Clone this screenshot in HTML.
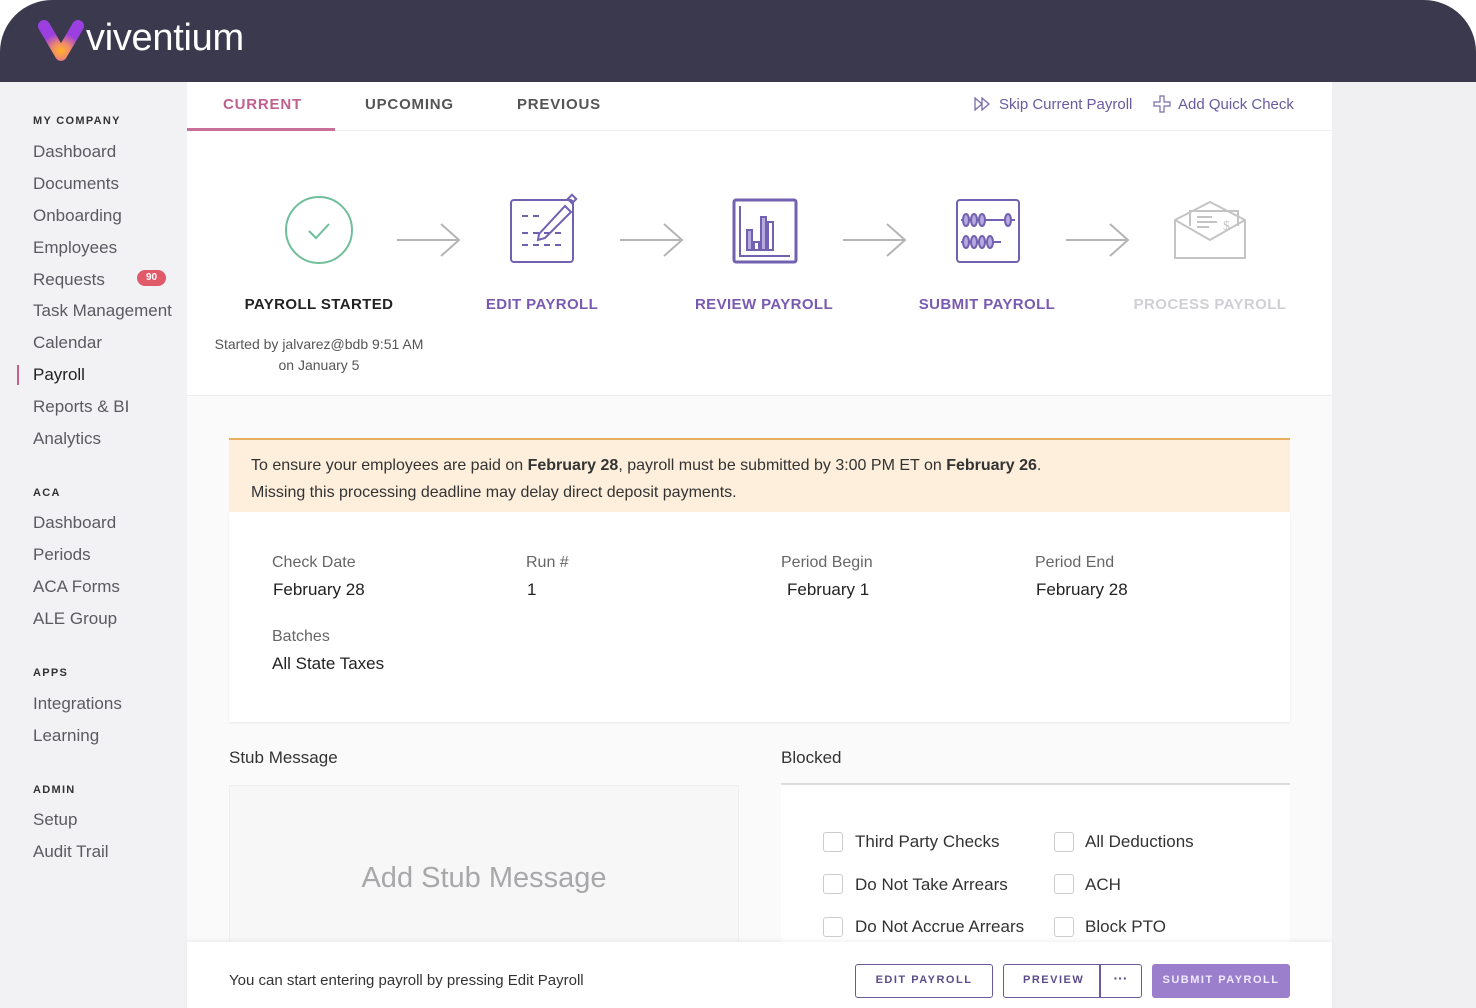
<!DOCTYPE html>
<html><head><meta charset="utf-8"><style>
*{margin:0;padding:0;box-sizing:border-box}
body{width:1476px;height:1008px;background:#fff;font-family:"Liberation Sans",sans-serif;overflow:hidden;position:relative}
.frame{position:absolute;left:0;top:0;width:1476px;height:1008px;border-radius:52px 52px 0 0;overflow:hidden;background:#f0f0f3}
.hdr{position:absolute;left:0;top:0;width:1476px;height:82px;background:#3b394d}
.logo{position:absolute;left:86px;top:17px;color:#fff;font-size:38px;letter-spacing:-0.3px}
.side{position:absolute;left:0;top:82px;width:187px;bottom:0;background:#f2f2f5}
.sh{position:absolute;left:33px;font-size:11px;font-weight:bold;letter-spacing:1.3px;color:#333}
.si{position:absolute;left:33px;font-size:17px;color:#5a5a60}
.main{position:absolute;left:187px;top:82px;width:1145px;bottom:0;background:#fafafa}
.abs{position:absolute}
.tab{position:absolute;top:14px;font-size:15px;font-weight:bold;letter-spacing:.8px;color:#555}
.lbl{position:absolute;font-size:15px;font-weight:bold;letter-spacing:.4px;color:#7a5ab0;text-align:center;width:220px}
.k{position:absolute;font-size:16px;color:#666}
.v{position:absolute;font-size:17px;color:#222}
.cb{position:absolute;width:20px;height:20px;border:1.5px solid #ccc;border-radius:3px;background:#fff}
.cl{position:absolute;font-size:17px;color:#333}
.btn{position:absolute;top:964px;height:34px;border:1.5px solid #6d5a9a;border-radius:3px;font-size:11px;font-weight:bold;letter-spacing:1.5px;color:#5c4d8a;text-align:center;line-height:31px;background:#fff}
</style></head><body>
<div class="frame">
<div class="hdr">
<svg class="abs" style="left:38px;top:20px" width="46" height="42" viewBox="0 0 46 42"><defs><radialGradient id="g" cx="0.5" cy="0.85" r="0.6"><stop offset="0" stop-color="#ffb42a"/><stop offset="0.45" stop-color="#f08a6a"/><stop offset="1" stop-color="#9b3fe0"/></radialGradient></defs><path d="M6 6 L23 35 L40 6" fill="none" stroke="url(#g)" stroke-width="12" stroke-linecap="round" stroke-linejoin="round"/></svg>
<div class="logo">viventium</div>
</div>
<div class="side">
<div class="sh" style="top:33px">MY COMPANY</div>
<div class="si" style="top:60px">Dashboard</div>
<div class="si" style="top:92px">Documents</div>
<div class="si" style="top:124px">Onboarding</div>
<div class="si" style="top:156px">Employees</div>
<div class="si" style="top:188px">Requests</div>
<div class="abs" style="left:137px;top:188px;width:29px;height:16px;border-radius:8px;background:#e05a6a;color:#fff;font-size:10px;font-weight:bold;text-align:center;line-height:16px">90</div>
<div class="si" style="top:219px">Task Management</div>
<div class="si" style="top:251px">Calendar</div>
<div class="abs" style="left:17px;top:283px;width:2px;height:20px;background:#c9608a"></div>
<div class="si" style="top:283px;color:#222">Payroll</div>
<div class="si" style="top:315px">Reports &amp; BI</div>
<div class="si" style="top:347px">Analytics</div>
<div class="sh" style="top:405px">ACA</div>
<div class="si" style="top:431px">Dashboard</div>
<div class="si" style="top:463px">Periods</div>
<div class="si" style="top:495px">ACA Forms</div>
<div class="si" style="top:527px">ALE Group</div>
<div class="sh" style="top:585px">APPS</div>
<div class="si" style="top:612px">Integrations</div>
<div class="si" style="top:644px">Learning</div>
<div class="sh" style="top:702px">ADMIN</div>
<div class="si" style="top:728px">Setup</div>
<div class="si" style="top:760px">Audit Trail</div>
</div>
<div class="main">
<div class="abs" style="left:0;top:0;width:1145px;height:314px;background:#fff;border-bottom:1px solid #eee"></div>
<div class="abs" style="left:0;top:48px;width:1145px;height:1px;background:#eee"></div>
<div class="tab" style="left:36px;color:#c0608e">CURRENT</div>
<div class="abs" style="left:0;top:46px;width:148px;height:3px;background:#c9709a"></div>
<div class="tab" style="left:178px">UPCOMING</div>
<div class="tab" style="left:330px">PREVIOUS</div>
<svg class="abs" style="left:787px;top:15px" width="18" height="14" viewBox="0 0 18 14"><path d="M1 1 L8 7 L1 13Z M8 1 L15 7 L8 13Z" fill="none" stroke="#7a6aaa" stroke-width="1.3"/></svg>
<div class="abs" style="left:812px;top:14px;font-size:15px;color:#6a5a9e">Skip Current Payroll</div>
<svg class="abs" style="left:966px;top:13px" width="18" height="18" viewBox="0 0 18 18"><path d="M7 1h4v6h6v4h-6v6h-4v-6h-6v-4h6z" fill="none" stroke="#7a6aaa" stroke-width="1.2"/></svg>
<div class="abs" style="left:991px;top:14px;font-size:15px;color:#6a5a9e">Add Quick Check</div>

<svg class="abs" style="left:0;top:100px" width="1145" height="100" viewBox="0 0 1145 100">
<circle cx="132" cy="48" r="33" fill="none" stroke="#6fbf9a" stroke-width="2"/>
<path d="M122 49 L129 56 L142 42" fill="none" stroke="#6fbf9a" stroke-width="2"/>
<g fill="none" stroke="#b5b5b5" stroke-width="2"><path d="M210 58H272M254 42L272 58L254 74"/><path d="M433 58H495M477 42L495 58L477 74"/><path d="M656 58H718M700 42L718 58L700 74"/><path d="M879 58H941M923 42L941 58L923 74"/></g>
<g fill="none" stroke="#7260b0" stroke-width="2"><rect x="324" y="18" width="62" height="62" rx="3"/><path d="M335 34h6M346 34h6M335 51h6M346 51h6M335 63h6M346 63h6M357 63h6M368 63h6M357 51h6M368 51h6"/><path d="M352 52 L378 24 L384 30 L358 56 L351 58Z"/><rect x="382" y="14" width="6" height="6" transform="rotate(45 385 17)"/>
<rect x="547" y="18" width="62" height="62" rx="2" stroke-width="3"/><path d="M553 24V74H603"/>
<rect x="560" y="48" width="5" height="20" fill="#b8a8e0"/><rect x="567" y="60" width="5" height="8"/><rect x="574" y="35" width="5" height="33" fill="#b8a8e0"/><rect x="581" y="40" width="5" height="28"/>
<rect x="770" y="18" width="62" height="62" rx="3"/><path d="M774 38H828M774 60H814"/>
<g fill="#b8a8e0"><ellipse cx="779" cy="38" rx="3" ry="6"/><ellipse cx="787" cy="38" rx="3" ry="6"/><ellipse cx="795" cy="38" rx="3" ry="6"/><ellipse cx="821" cy="38" rx="3" ry="6"/><ellipse cx="779" cy="60" rx="3" ry="6"/><ellipse cx="787" cy="60" rx="3" ry="6"/><ellipse cx="795" cy="60" rx="3" ry="6"/><ellipse cx="803" cy="60" rx="3" ry="6"/></g></g>
<g fill="none" stroke="#c4c4c4" stroke-width="2"><path d="M988 38V76H1058V38L1023 20Z"/><path d="M988 38L1023 58L1058 38"/><path d="M1003 44V29H1051V44"/><path d="M1010 35H1025M1010 40H1030M1010 45H1022"/><text x="1036" y="48" font-size="14" fill="#c4c4c4" stroke="none" font-family="Liberation Serif">$</text></g>
</svg>
<div class="lbl" style="left:22px;top:214px;color:#222">PAYROLL STARTED</div>
<div class="lbl" style="left:245px;top:214px">EDIT PAYROLL</div>
<div class="lbl" style="left:467px;top:214px">REVIEW PAYROLL</div>
<div class="lbl" style="left:690px;top:214px">SUBMIT PAYROLL</div>
<div class="lbl" style="left:913px;top:214px;color:#d0d0d4">PROCESS PAYROLL</div>
<div class="abs" style="left:12px;top:252px;width:240px;text-align:center;font-size:14px;line-height:21px;color:#555">Started by jalvarez@bdb 9:51 AM<br>on January 5</div>

<div class="abs" style="left:42px;top:356px;width:1061px;height:74px;background:#fdefdb;border-top:2px solid #e6b060"></div>
<div class="abs" style="left:64px;top:370px;font-size:16px;line-height:27px;color:#333">To ensure your employees are paid on <b>February 28</b>, payroll must be submitted by 3:00 PM ET on <b>February 26</b>.<br>Missing this processing deadline may delay direct deposit payments.</div>
<div class="abs" style="left:42px;top:430px;width:1061px;height:210px;background:#fff;box-shadow:0 1px 2px rgba(0,0,0,.08)"></div>
<div class="k" style="left:85px;top:472px">Check Date</div><div class="v" style="left:86px;top:498px">February 28</div>
<div class="k" style="left:339px;top:472px">Run #</div><div class="v" style="left:340px;top:498px">1</div>
<div class="k" style="left:594px;top:472px">Period Begin</div><div class="v" style="left:600px;top:498px">February 1</div>
<div class="k" style="left:848px;top:472px">Period End</div><div class="v" style="left:849px;top:498px">February 28</div>
<div class="k" style="left:85px;top:546px">Batches</div><div class="v" style="left:85px;top:572px">All State Taxes</div>

<div class="abs" style="left:42px;top:666px;font-size:17px;color:#333">Stub Message</div>
<div class="abs" style="left:594px;top:666px;font-size:17px;color:#333">Blocked</div>
<div class="abs" style="left:42px;top:703px;width:510px;height:160px;background:#f7f7f8;border:1px solid #eee"></div>
<div class="abs" style="left:42px;top:780px;width:510px;text-align:center;font-size:29px;color:#a8a8ab">Add Stub Message</div>
<div class="abs" style="left:594px;top:701px;width:509px;height:160px;background:#fff;border-top:2px solid #ddd"></div>
<div class="cb" style="left:636px;top:750px"></div><div class="cl" style="left:668px;top:750px">Third Party Checks</div>
<div class="cb" style="left:867px;top:750px"></div><div class="cl" style="left:898px;top:750px">All Deductions</div>
<div class="cb" style="left:636px;top:792px"></div><div class="cl" style="left:668px;top:793px">Do Not Take Arrears</div>
<div class="cb" style="left:867px;top:792px"></div><div class="cl" style="left:898px;top:793px">ACH</div>
<div class="cb" style="left:636px;top:835px"></div><div class="cl" style="left:668px;top:835px">Do Not Accrue Arrears</div>
<div class="cb" style="left:867px;top:835px"></div><div class="cl" style="left:898px;top:835px">Block PTO</div>
<div class="abs" style="left:0;top:860px;width:1145px;height:70px;background:#fff;box-shadow:0 -2px 4px rgba(0,0,0,.05)"></div>
<div class="abs" style="left:42px;top:890px;font-size:15px;color:#333">You can start entering payroll by pressing Edit Payroll</div>
</div>
<div class="btn" style="left:855px;width:138px">EDIT PAYROLL</div>
<div class="btn" style="left:1003px;width:139px;text-align:left;padding-left:19px">PREVIEW</div>
<div class="abs" style="left:1099px;top:964px;width:1.5px;height:34px;background:#6d5a9a"></div>
<div class="abs" style="left:1099px;top:970px;width:43px;text-align:center;color:#5c4d8a;font-size:14px;font-weight:bold">···</div>
<div class="btn" style="left:1152px;width:138px;background:#9b7fcc;border-color:#9b7fcc;color:#f0eaff">SUBMIT PAYROLL</div>
</div>
</body></html>
